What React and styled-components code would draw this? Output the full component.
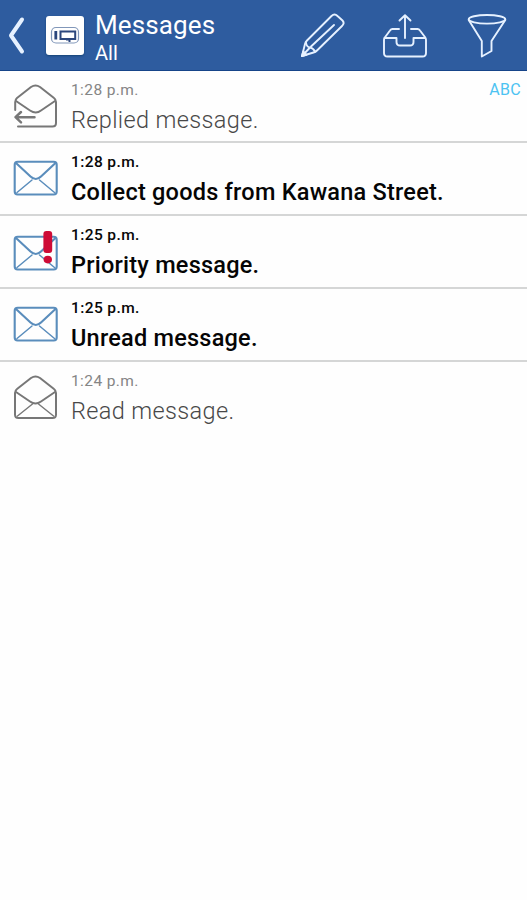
import React from 'react';
import styled, { createGlobalStyle } from 'styled-components';

const GlobalStyle = createGlobalStyle`
  * { box-sizing: border-box; }
  body { margin: 0; background: #fefefe; font-family: Roboto, "Liberation Sans", sans-serif; }
`;

const Screen = styled.main`
  min-height: 100vh;
  background: #fefefe;
  overflow: hidden;
`;

const Toolbar = styled.header`
  display: flex;
  align-items: flex-start;
  height: 70.7px;
  background: #2e5c9f;
  border-bottom: 1px solid #164489;
  color: #fff;
`;

const IconButton = styled.button`
  flex: none;
  width: ${(p) => p.$width}px;
  height: 69px;
  padding: 0;
  border: 0;
  background: none;
  color: #e6f1ff;
  svg { display: block; }
`;

const Logo = styled.div`
  flex: none;
  width: 38px;
  height: 39px;
  margin-top: 16px;
  border-radius: 3px;
  background: #fff;
  box-shadow: 0 1px 2px #174477;
  svg { display: block; }
`;

const Titles = styled.div`
  flex: 1;
  padding: 9px 0 0 11px;
  white-space: nowrap;
`;

const Title = styled.h1`
  margin: 0;
  font-size: 26px;
  line-height: 32px;
  font-weight: 400;
  letter-spacing: 0.12px;
`;

const Subtitle = styled.div`
  font-size: 20px;
  line-height: 24px;
`;

const List = styled.ul`
  margin: 0;
  padding: 0;
  list-style: none;
`;

const Row = styled.li`
  display: flex;
  height: 72.8px;
  border-bottom: 2px solid #d5d6d6;
  color: ${(p) => (p.$unread ? '#050505' : '#484848')};
  &:last-child { border-bottom-color: transparent; }
`;

const RowIcon = styled.div`
  flex: none;
  width: 71px;
  svg { display: block; }
`;

const Body = styled.div`
  flex: 1;
  padding-top: 9px;
  white-space: nowrap;
`;

const Time = styled.div`
  font-size: 15.5px;
  line-height: 20px;
  font-weight: ${(p) => (p.$unread ? 500 : 400)};
  letter-spacing: 0.4px;
  color: ${(p) => (p.$unread ? '#080808' : '#858585')};
`;

const Subject = styled.div`
  margin-top: 4px;
  font-size: 23.5px;
  line-height: 32px;
  font-weight: ${(p) => (p.$unread ? 500 : 300)};
  letter-spacing: ${(p) => (p.$unread ? 0.23 : 0.37)}px;
`;

const Sender = styled.div`
  padding: 10px 6px 0 0;
  font-size: 16px;
  line-height: 18px;
  letter-spacing: 0.3px;
  color: #4cc3f2;
`;

const stroke = { fill: 'none', strokeLinecap: 'round', strokeLinejoin: 'round' };

const BackIcon = () => (
  <svg width="46" height="69" {...stroke} stroke="currentColor" strokeWidth="4">
    <path d="M22 19.5 L11 35.5 L22 51.5" />
  </svg>
);

const LogoMark = () => (
  <svg width="38" height="39" fill="none">
    <rect x="5.5" y="11.5" width="27" height="15.5" rx="4.5" stroke="#8197b9" strokeWidth="1.2" />
    <path d="M9.8 15V23.5" stroke="#2c477d" strokeWidth="2.8" />
    <path d="M14.5 15.5H29.2V23H14.5Z" stroke="#2c477d" strokeWidth="2" />
    <path d="M20 23.5H23.5V26" stroke="#2c477d" strokeWidth="2" />
  </svg>
);

const PencilIcon = () => (
  <svg width="82" height="69" viewBox="281 0 82 69" {...stroke} stroke="currentColor" strokeWidth="1.9">
    <path d="M302 56 L305 44 Q305.5 42 307 40.5 L331.5 16 Q334.5 13 337.5 16 L342.5 20.5 Q345 23.2 342 26 L317 50.5 Q315.5 52 313.5 52.5Z" />
    <path d="M306 42.5 Q306.5 47 310 47.5 Q313 48 315 51.5 M311 46.5 L334 25 M302 56 L310 47.5" />
    <path d="M302 56 L303.3 51.5 L306.5 54.8Z" fill="currentColor" />
  </svg>
);

const OutboxIcon = () => (
  <svg width="82" height="69" viewBox="363 0 82 69" {...stroke} stroke="currentColor" strokeWidth="1.9">
    <path d="M399 29H392.5Q391 29 390 30.5L384.8 37.5Q384 38.5 384 40V53Q384 56.5 387.5 56.5H422.5Q426 56.5 426 53V40Q426 38.5 425.3 37.5L420 30.5Q419 29 417.5 29H411" />
    <path d="M384.5 38H396.5V42Q396.5 45.5 400 45.5H410Q413.5 45.5 413.5 42V38H425" />
    <path d="M405 38V15.5M399.5 20.5L405 15.2L410.5 20.5" />
  </svg>
);

const FilterIcon = () => (
  <svg width="82" height="69" viewBox="445 0 82 69" {...stroke} stroke="currentColor" strokeWidth="1.9">
    <ellipse cx="487" cy="19.3" rx="18.3" ry="4.3" />
    <path d="M468.7 20L481.8 41V56.5L491.5 51V41L505.3 20" />
  </svg>
);

const ClosedEnvelope = ({ priority }) => (
  <svg width="71" height="70" {...stroke} stroke="#5a8dbc" strokeWidth="2.1">
    <g transform={priority ? 'translate(0 2)' : undefined}>
      <rect x="14.7" y="18.7" width="42" height="32.8" rx="3" />
      <path d="M16 20L30.5 33.5Q35.8 38.5 41 33.5L55.5 20" />
      <path d="M17 49.5L32 37M39.5 37L54.5 49.5" strokeWidth="1.5" />
    </g>
    {priority && (
      <g stroke="none" fill="#ce0b36">
        <rect x="43.4" y="15" width="8.8" height="22" rx="3" />
        <ellipse cx="47.8" cy="43.6" rx="4.2" ry="3.8" />
      </g>
    )}
  </svg>
);

const OpenEnvelope = () => (
  <svg width="71" height="70" {...stroke} stroke="#777" strokeWidth="2">
    <path d="M15 31Q15 28.5 17 27L31 16Q35.5 13 40 16L54 27Q56 28.5 56 31V52.5Q56 56 52.5 56H18.5Q15 56 15 52.5Z" />
    <path d="M16 30L30 39.5Q35.5 43.5 41 39.5L55 30" />
    <path d="M17.5 54L32.5 42M38.5 42L53.5 54" strokeWidth="1.4" />
  </svg>
);

const RepliedEnvelope = () => (
  <svg width="71" height="70" {...stroke} stroke="#777" strokeWidth="2">
    <path d="M15.2 39V31Q15.2 28.5 17 27L31 16Q35.5 13 40 16L54 27Q56 28.5 56 31V52Q56 55.5 52.5 55.5H18" />
    <path d="M16 30L30 39.5Q36 43.5 41 39.5L55 30" />
    <path d="M34.5 46.2H16M21 41L15.5 46.2L21 51.3" strokeWidth="2.5" />
  </svg>
);

const messages = [
  { time: '1:28 p.m.', subject: 'Replied message.', icon: <RepliedEnvelope />, sender: 'ABC' },
  { time: '1:28 p.m.', subject: 'Collect goods from Kawana Street.', icon: <ClosedEnvelope />, unread: true },
  { time: '1:25 p.m.', subject: 'Priority message.', icon: <ClosedEnvelope priority />, unread: true },
  { time: '1:25 p.m.', subject: 'Unread message.', icon: <ClosedEnvelope />, unread: true },
  { time: '1:24 p.m.', subject: 'Read message.', icon: <OpenEnvelope /> },
];

export default function App() {
  return (
    <>
      <GlobalStyle />
      <Screen>
        <Toolbar>
          <IconButton $width={46} aria-label="Back"><BackIcon /></IconButton>
          <Logo><LogoMark /></Logo>
          <Titles>
            <Title>Messages</Title>
            <Subtitle>All</Subtitle>
          </Titles>
          <IconButton $width={82} aria-label="Compose"><PencilIcon /></IconButton>
          <IconButton $width={82} aria-label="Outbox"><OutboxIcon /></IconButton>
          <IconButton $width={82} aria-label="Filter"><FilterIcon /></IconButton>
        </Toolbar>
        <List>
          {messages.map((m) => (
            <Row key={m.subject} $unread={m.unread}>
              <RowIcon>{m.icon}</RowIcon>
              <Body>
                <Time $unread={m.unread}>{m.time}</Time>
                <Subject $unread={m.unread}>{m.subject}</Subject>
              </Body>
              {m.sender && <Sender>{m.sender}</Sender>}
            </Row>
          ))}
        </List>
      </Screen>
    </>
  );
}
